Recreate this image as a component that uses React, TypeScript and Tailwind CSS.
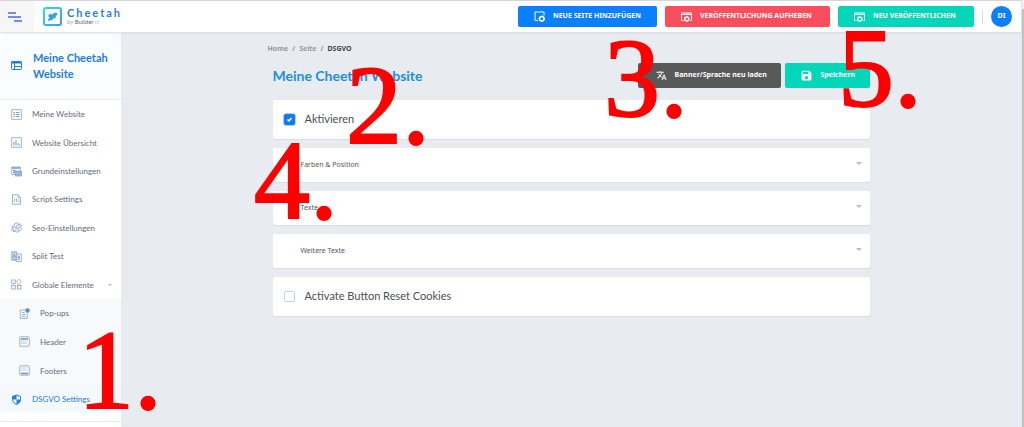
import React, { useState } from "react";
import { MdSave, MdTranslate } from "react-icons/md";

type IconName =
  | "list"
  | "chart"
  | "settings"
  | "script"
  | "seo"
  | "split"
  | "blocks"
  | "popup"
  | "header"
  | "footer";

interface NavItem {
  label: string;
  icon: IconName;
  hasChildren?: boolean;
}

const NAV_ITEMS: NavItem[] = [
  { label: "Meine Website", icon: "list" },
  { label: "Website Übersicht", icon: "chart" },
  { label: "Grundeinstellungen", icon: "settings" },
  { label: "Script Settings", icon: "script" },
  { label: "Seo-Einstellungen", icon: "seo" },
  { label: "Split Test", icon: "split" },
  { label: "Globale Elemente", icon: "blocks", hasChildren: true },
];

const GLOBAL_ITEMS: NavItem[] = [
  { label: "Pop-ups", icon: "popup" },
  { label: "Header", icon: "header" },
  { label: "Footers", icon: "footer" },
];

const PANELS = ["Farben & Position", "Texte", "Weitere Texte"];

const ICONS: Record<IconName, React.ReactNode> = {
  list: (
    <>
      <rect x="1.5" y="1.5" width="19" height="19" />
      <path d="M5 7h3M5 11h3M5 15h3M10 7h7M10 11h7M10 15h7" strokeWidth="2" />
    </>
  ),
  chart: (
    <>
      <rect x="1.5" y="1.5" width="19" height="19" />
      <path d="M6 10v7M10 6v11M14 12v5M17 15v2" strokeWidth="2" />
    </>
  ),
  settings: (
    <>
      <path d="M8 17H1.500V2h17v7" />
      <path d="M2 4h16M4 9h5M4 13h4" strokeWidth="3" />
      <rect x="9" y="10" width="12" height="10" fill="#a9bfdc" />
      <path d="M11 13h8M11 17h8" />
    </>
  ),
  script: (
    <>
      <path d="M3 1.500h11l5 5v14H3zM14 2v5h5" />
      <path d="m8 10-2 3 2 3M14 10l2 3-2 3M11 9v7" />
    </>
  ),
  seo: (
    <>
      <path d="M8 5l1-3h5l1 3 3-1 3 4-2 3 2 3-3 4-3-1-1 3H9l-1-2-4 1-3-4 2-3-1-4z" />
      <circle cx="7" cy="14" r="3.500" />
      <circle cx="14" cy="9" r="3.500" />
      <path d="M14 12v5M7 7v3" />
    </>
  ),
  split: (
    <>
      <path d="M1.500 1.500h10v16h-10z" fill="#c6d5e8" />
      <path d="M4 14l2.500-8L9 14M5 11h3M1 18h11" />
      <path d="M11 6h9.500v15H10v-3M14 10h3v7h-3zM14 13h3" />
    </>
  ),
  blocks: (
    <>
      <rect x="1.500" y="2" width="7" height="7" />
      <path d="m16 .5 5 5-5 5-5-5z" />
      <rect x="1.500" y="13" width="7" height="7" />
      <rect x="13" y="13" width="7" height="7" />
    </>
  ),
  popup: (
    <>
      <path d="M13 4H2.500v17h14V11M6 9h5M6 13h7M6 17h7" />
      <circle cx="17" cy="5" r="4" fill="#6689b7" />
    </>
  ),
  header: (
    <>
      <rect x="1.500" y="1.500" width="19" height="19" rx="2" />
      <path d="M4 6h14" stroke="#6c91c4" strokeWidth="3" />
      <path d="M5 11h12M5 15h12" strokeDasharray="2 2" />
    </>
  ),
  footer: (
    <>
      <rect x="1.500" y="1.500" width="19" height="19" rx="2" />
      <path d="M4 17h14" stroke="#6c91c4" strokeWidth="3" />
      <path d="M5 6h12M5 10h12" strokeDasharray="2 2" />
    </>
  ),
};

function NavIcon({ name }: { name: IconName }) {
  return (
    <svg viewBox="0 0 22 22" className="size-[11px] shrink-0" fill="none" stroke="#7f9dc5" strokeWidth="1.500">
      {ICONS[name]}
    </svg>
  );
}

function PageAddIcon() {
  return (
    <svg viewBox="0 0 22 22" className="size-[11px] shrink-0" fill="none" stroke="white" strokeWidth="2">
      <path d="M8 19H2V2h18v7" />
      <circle cx="15.500" cy="15.500" r="4.500" strokeWidth="3" />
      <path d="M15.500 9v2M15.500 20v2M9 15.500h2M20 15.500h2" />
    </svg>
  );
}

function PublishIcon() {
  return (
    <svg viewBox="0 0 22 20" className="h-[10px] w-[11px] shrink-0" fill="none" stroke="white" strokeWidth="2">
      <path d="M5 17H1V2h20v15h-3M1 5h20" />
      <circle cx="11.500" cy="14" r="4" strokeWidth="3" />
    </svg>
  );
}

function Logo() {
  return (
    <a href="#" className="flex items-center gap-[5px] pl-[9px]">
      <svg viewBox="0 0 38 38" className="size-[19px]" fill="none">
        <defs>
          <linearGradient id="logo" x1="0" y1="0" x2="1" y2="1">
            <stop stopColor="#27e0d2" />
            <stop offset="1" stopColor="#4597f5" />
          </linearGradient>
        </defs>
        <rect x="2" y="2" width="34" height="34" rx="4" stroke="url(#logo)" strokeWidth="4" />
        <path
          d="M10 18l3-4 6 1 4-4 5 1 1 4-3 1-1 5-4 1-4 4-3-1-3 3-1-4 3-3-1-2z"
          fill="#2aa5ee"
        />
      </svg>
      <span className="flex flex-col">
        <span className="text-[11px] leading-[10px] font-bold tracking-[2px] text-[#2f7de0]">Cheetah</span>
        <span className="text-[6px] leading-[7px] text-[#666]">
          <span className="text-[#aaa]">by</span> Builder<span className="text-[#a9d5f5]">all</span>
        </span>
      </span>
    </a>
  );
}

function TopBar() {
  return (
    <header className="relative z-10 flex h-8 items-stretch border-t border-[#d5d6da] bg-white shadow-[0_1px_2px_#d5d8dd]">
      <button type="button" aria-label="Menü" className="flex w-[34px] items-center justify-center bg-[#f6f6f7] pr-1">
        <svg viewBox="0 0 14 10" className="h-[10px] w-[14px]" stroke="#4b67ec" strokeWidth="1.500">
          <path d="M0 1h8M0 5h13M6 9h8" />
        </svg>
      </button>
      <Logo />
      <div className="ml-auto flex items-center gap-2 pr-[9px] font-['Noto_Sans',sans-serif] text-[7px] font-bold whitespace-nowrap text-white">
        <button type="button" className="flex h-[21px] w-[139px] items-center gap-2 rounded-xs bg-[#0a80ff] pl-4">
          <PageAddIcon />
          NEUE SEITE HINZUFÜGEN
        </button>
        <button type="button" className="flex h-[21px] w-[165px] items-center gap-2 rounded-xs bg-[#fa4e5c] pl-4">
          <PublishIcon />
          VERÖFFENTLICHUNG AUFHEBEN
        </button>
        <button type="button" className="flex h-[21px] w-[136px] items-center gap-2 rounded-xs bg-[#04d7b9] pl-4">
          <PublishIcon />
          NEU VERÖFFENTLICHEN
        </button>
        <span className="h-[14px] w-px bg-[#d9dde0]" />
        <button type="button" className="size-[21px] rounded-full bg-[#0a80ff] text-center">
          DI
        </button>
      </div>
    </header>
  );
}

function Sidebar() {
  return (
    <aside className="w-[121px] shrink-0 bg-white text-[8px] text-[#5f6d81]">
      <a
        href="#"
        className="flex h-[68px] items-center gap-[11px] border-b border-[#e3ebf0] bg-[#f9fdff] pl-[11px] text-[11px] leading-4 font-bold text-[#1f7ce8]"
      >
        <svg viewBox="0 0 22 18" className="h-[9px] w-[11px] shrink-0" fill="none" stroke="#1f7ce8" strokeWidth="2">
          <rect x="1" y="1" width="20" height="16" rx="2" />
          <path d="M1 3h20" strokeWidth="4" />
          <path d="M7 4v13M7 11h14" />
        </svg>
        <span>
          Meine Cheetah
          <br />
          Website
        </span>
      </a>
      <nav>
        <ul className="grid h-[199px] grid-rows-7">
          {NAV_ITEMS.map((item) => (
            <li key={item.label} className="flex">
              <a href="#" className="flex flex-1 items-center gap-[10px] pr-[9px] pl-[11px]">
                <NavIcon name={item.icon} />
                <span className="whitespace-nowrap">{item.label}</span>
                {item.hasChildren && (
                  <svg viewBox="0 0 4 2" className="ml-auto h-[2px] w-1" fill="#b4bac2">
                    <path d="M0 0h4L2 2z" />
                  </svg>
                )}
              </a>
            </li>
          ))}
        </ul>
        <ul className="grid h-[86px] grid-rows-3 bg-[#f7f9fb]">
          {GLOBAL_ITEMS.map((item) => (
            <li key={item.label} className="flex">
              <a href="#" className="flex flex-1 items-center gap-[10px] pl-[19px]">
                <NavIcon name={item.icon} />
                {item.label}
              </a>
            </li>
          ))}
        </ul>
        <a href="#" className="flex h-7 items-center gap-[10px] bg-[#f4f9fd] pl-[11px] text-[#1f7ce8]">
          <svg viewBox="0 0 22 22" className="size-[11px] shrink-0" fill="none" stroke="#1f7ce8" strokeWidth="2">
            <path d="M11 2l8 3v6c0 5-4 8-8 10-4-2-8-5-8-10V5z" />
            <path d="M11 2v9H3V5zM11 11h8c0 5-4 8-8 10z" fill="#1f7ce8" stroke="none" />
          </svg>
          DSGVO Settings
        </a>
      </nav>
      <hr className="mt-2 border-[#e3ebf0]" />
    </aside>
  );
}

interface ToggleCardProps {
  label: string;
  defaultChecked?: boolean;
}

function ToggleCard({ label, defaultChecked = false }: ToggleCardProps) {
  const [checked, setChecked] = useState(defaultChecked);

  return (
    <label className="flex h-[39px] items-center gap-[10px] rounded-xs bg-white pl-[11px] text-[11px] text-[#4b4f54] shadow-[0_1px_1px_#d9dce1]">
      <span className="grid size-[11px]">
        <input
          type="checkbox"
          checked={checked}
          onChange={() => setChecked(!checked)}
          className="col-start-1 row-start-1 size-[11px] appearance-none rounded-xs border border-[#c9d3d6] checked:border-[#1479f5] checked:bg-[#1479f5] checked:shadow-[0_0_0_1px_#a8d2fc]"
        />
        {checked && (
          <svg viewBox="0 0 11 11" className="pointer-events-none col-start-1 row-start-1 size-[11px]" fill="none" stroke="white" strokeWidth="1.500">
            <path d="M3.500 5.500L5 7l2.500-3" />
          </svg>
        )}
      </span>
      {label}
    </label>
  );
}

function Panel({ title }: { title: string }) {
  return (
    <button
      type="button"
      className="flex h-[34px] items-center justify-between rounded-xs bg-white pr-2 pl-7 font-['Noto_Sans',sans-serif] text-[7px] text-[#55585c] shadow-[0_1px_1px_#d9dce1]"
    >
      {title}
      <svg viewBox="0 0 6 3" className="mb-1 h-[3px] w-[6px]" fill="#b9bcc0">
        <path d="M0 0h6L3 3z" />
      </svg>
    </button>
  );
}

function Content() {
  return (
    <main className="min-w-0 flex-1 bg-[#e8ebf0]">
      <div className="mx-auto max-w-[607px] px-[5px] pt-3">
        <nav
          aria-label="Breadcrumb"
          className="-ml-[5px] flex gap-1 font-['Noto_Sans',sans-serif] text-[7px] leading-[10px] font-bold text-[#94989e]"
        >
          <a href="#">Home</a>
          <span>/</span>
          <a href="#">Seite</a>
          <span>/</span>
          <span className="text-[#414549]">DSGVO</span>
        </nav>
        <div className="mt-[9px] flex items-center justify-between">
          <h1 className="text-[14px] leading-5 font-bold text-[#228bee]">Meine Cheetah Website</h1>
          <div className="flex gap-1 font-['Noto_Sans',sans-serif] text-[7px] font-bold whitespace-nowrap text-white">
            <button type="button" className="flex h-[25px] w-[143px] items-center gap-2 rounded-xs bg-[#595959] pl-[18px]">
              <MdTranslate className="size-[11px]" />
              Banner/Sprache neu laden
            </button>
            <button type="button" className="flex h-[25px] w-[85px] items-center gap-2 rounded-xs bg-[#04d7b9] pl-[15px]">
              <MdSave className="size-[13px]" />
              Speichern
            </button>
          </div>
        </div>
        <div className="mt-3 flex flex-col gap-[9px]">
          <ToggleCard label="Aktivieren" defaultChecked />
          {PANELS.map((title) => (
            <Panel key={title} title={title} />
          ))}
          <ToggleCard label="Activate Button Reset Cookies" />
        </div>
      </div>
    </main>
  );
}

// Numbered steps lie on top of the whole page
function StepMarkers() {
  return (
    <div className="pointer-events-none absolute inset-0 z-20 font-['Liberation_Serif',serif] text-[112px] leading-none text-[#ff0000] [-webkit-text-stroke:2px_#ff0000]">
      <span className="absolute top-[314px] left-[78px]">1.</span>
      <span className="absolute top-[49px] left-[346px]">2.</span>
      <span className="absolute top-[22px] left-[604px]">3.</span>
      <span className="absolute top-[124px] left-[254px]">4.</span>
      <span className="absolute top-[12px] left-[838px]">5.</span>
    </div>
  );
}

export default function App() {
  return (
    <div className="relative flex min-h-screen overflow-hidden bg-[#e8ebf0] font-['Lato',sans-serif]">
      <div className="flex min-w-0 flex-1 flex-col">
        <TopBar />
        <div className="flex flex-1">
          <Sidebar />
          <Content />
        </div>
      </div>
      <div className="w-[3px] border-l border-[#e4e5e7] bg-[#f1f1f1] pt-[9px]">
        <div className="h-full bg-[#c1c1c1]" />
      </div>
      <StepMarkers />
    </div>
  );
}
